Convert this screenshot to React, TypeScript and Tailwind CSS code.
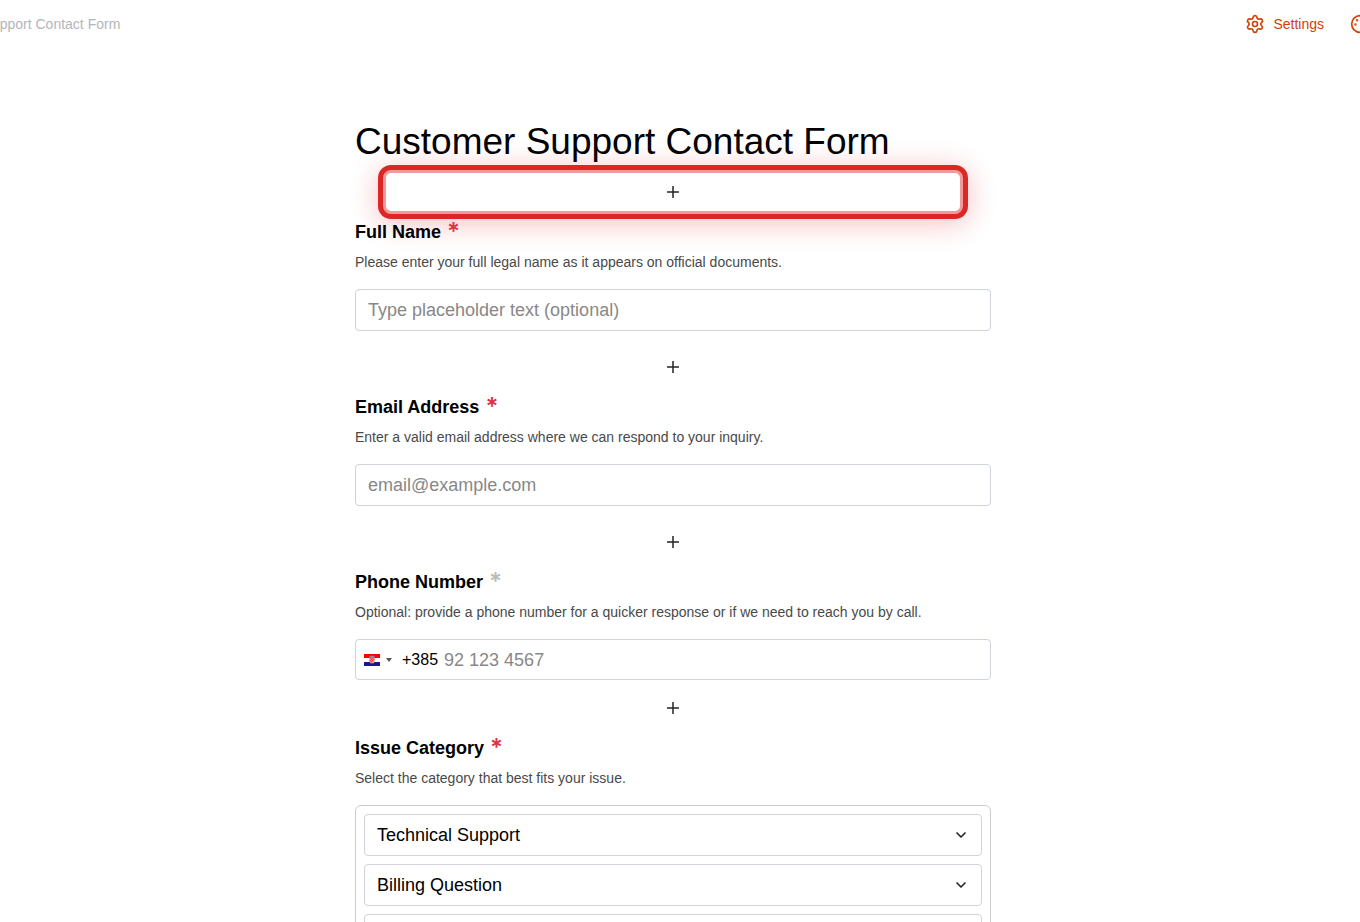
import { ReactNode, useState } from "react";
import { ChevronDown, Palette, Settings } from "lucide-react";

const FORM_TITLE = "Customer Support Contact Form";

const CATEGORIES = ["Technical Support", "Billing Question", "Account Access"];

function CroatiaFlag() {
  return (
    <svg viewBox="0 0 16 12" className="h-3 w-4" aria-hidden="true">
      <rect width="16" height="4" fill="#f00" />
      <rect y="4" width="16" height="4" fill="#fff" />
      <rect y="8" width="16" height="4" fill="#171796" />
      <path d="M5.5 3.5h5v3.5a2.5 2.5 0 0 1-5 0z" fill="#f39a9a" />
      <path d="M5.5 3.5h1.25v1.25h-1.25zM8 3.5h1.25v1.25h-1.25zM6.75 4.75h1.25v1.25h-1.25zM9.25 4.75h1.25v1.25h-1.25zM5.5 6h1.25v1.25h-1.25zM8 6h1.25v1.25h-1.25zM6.75 7.25h1.25v1.25h-1.25z" fill="#f03030" />
      <path d="M5.5 2.5l1-1 1.5.6 1.5-.6 1 1v1h-5z" fill="#8a86c8" />
    </svg>
  );
}

function AddBlock({ highlighted }: { highlighted?: boolean }) {
  return (
    <div className="flex h-12 items-center px-7">
      <button
        type="button"
        aria-label="Add field"
        className={`flex h-11 w-full items-center justify-center rounded-lg ${
          highlighted
            ? "border-3 border-[#f19a9a] bg-white shadow-[0_0_0_5px_#dd2727,0_4px_28px_5px_rgba(221,39,39,0.3)]"
            : ""
        }`}
      >
        <svg viewBox="0 0 12 12" className="size-3" stroke="#212529" strokeWidth="1.5" aria-hidden="true">
          <path d="M6 0v12M0 6h12" />
        </svg>
      </button>
    </div>
  );
}

interface FieldProps {
  id: string;
  label: string;
  description: string;
  required?: boolean;
  children: ReactNode;
}

function Field({ id, label, description, required, children }: FieldProps) {
  return (
    <div>
      <div className="relative flex h-8 items-center gap-1.5">
        <label htmlFor={id} className="text-lg font-bold">{label}</label>
        <span className={`font-['Inter',sans-serif] text-2xl leading-8 font-semibold ${required ? "text-[#dc3545]" : "text-[#bbb]"}`}>
          *
        </span>
      </div>
      <p className="mb-[13px] text-sm leading-7 text-[#494949]">{description}</p>
      {children}
    </div>
  );
}

export default function App() {
  const [name, setName] = useState("");
  const [email, setEmail] = useState("");
  const [phone, setPhone] = useState("");

  return (
    <div className="h-screen overflow-hidden bg-white font-['Liberation_Sans',Arial,sans-serif] text-black">
      {/* Top bar */}
      <header className="-mx-24 flex h-12 items-center justify-between text-sm whitespace-nowrap">
        <span className="pl-3.5 text-[#b3b6b8]">{FORM_TITLE}</span>
        <nav className="flex items-center gap-6.5 pr-21.5 text-[#d04206]">
          <a href="#settings" className="flex items-center gap-2">
            <Settings className="size-5" />
            Settings
          </a>
          <a href="#design" aria-label="Design">
            <Palette className="size-5" />
          </a>
        </nav>
      </header>

      {/* Form */}
      <main className="pr-3.5">
        <form className="mx-auto w-full max-w-[636px] pt-17">
          <h1 className="text-[37px] leading-[52px]">{FORM_TITLE}</h1>

          <AddBlock highlighted />
          <Field id="name" label="Full Name" description="Please enter your full legal name as it appears on official documents." required>
            <input
              id="name"
              type="text"
              value={name}
              onChange={(e) => setName(e.target.value)}
              placeholder="Type placeholder text (optional)"
              className="mb-3 block h-[42px] w-full rounded border border-[#ced4da] px-3 text-lg placeholder:text-[#888]"
            />
          </Field>

          <AddBlock />
          <Field id="email" label="Email Address" description="Enter a valid email address where we can respond to your inquiry." required>
            <input
              id="email"
              type="email"
              value={email}
              onChange={(e) => setEmail(e.target.value)}
              placeholder="email@example.com"
              className="mb-3 block h-[42px] w-full rounded border border-[#ced4da] px-3 text-lg placeholder:text-[#888]"
            />
          </Field>

          <AddBlock />
          <Field id="phone" label="Phone Number" description="Optional: provide a phone number for a quicker response or if we need to reach you by call.">
            <div className="mb-1 flex h-[41px] items-center rounded border border-[#ced4da] pl-2">
              <button type="button" aria-label="Country" className="flex items-center gap-1.5">
                <CroatiaFlag />
                <svg viewBox="0 0 6 4" className="h-1 w-1.5" fill="#555" aria-hidden="true">
                  <path d="M0 0h6L3 4z" />
                </svg>
              </button>
              <span className="ml-2.5 text-base">+385</span>
              <input
                id="phone"
                type="tel"
                value={phone}
                onChange={(e) => setPhone(e.target.value)}
                placeholder="92 123 4567"
                className="ml-1.5 min-w-0 flex-1 text-lg placeholder:text-[#888]"
              />
            </div>
          </Field>

          <AddBlock />
          <Field id="category" label="Issue Category" description="Select the category that best fits your issue." required>
            <div className="flex flex-col gap-2 rounded-md border border-[#c9cbcf] p-2">
              {CATEGORIES.map((category, i) => (
                <button
                  key={category}
                  id={i === 0 ? "category" : undefined}
                  type="button"
                  className="flex h-[42px] items-center justify-between rounded border border-[#ced4da] px-3 text-lg"
                >
                  {category}
                  <ChevronDown className="size-4 text-[#212529]" strokeWidth={2.5} />
                </button>
              ))}
            </div>
          </Field>
        </form>
      </main>
    </div>
  );
}
